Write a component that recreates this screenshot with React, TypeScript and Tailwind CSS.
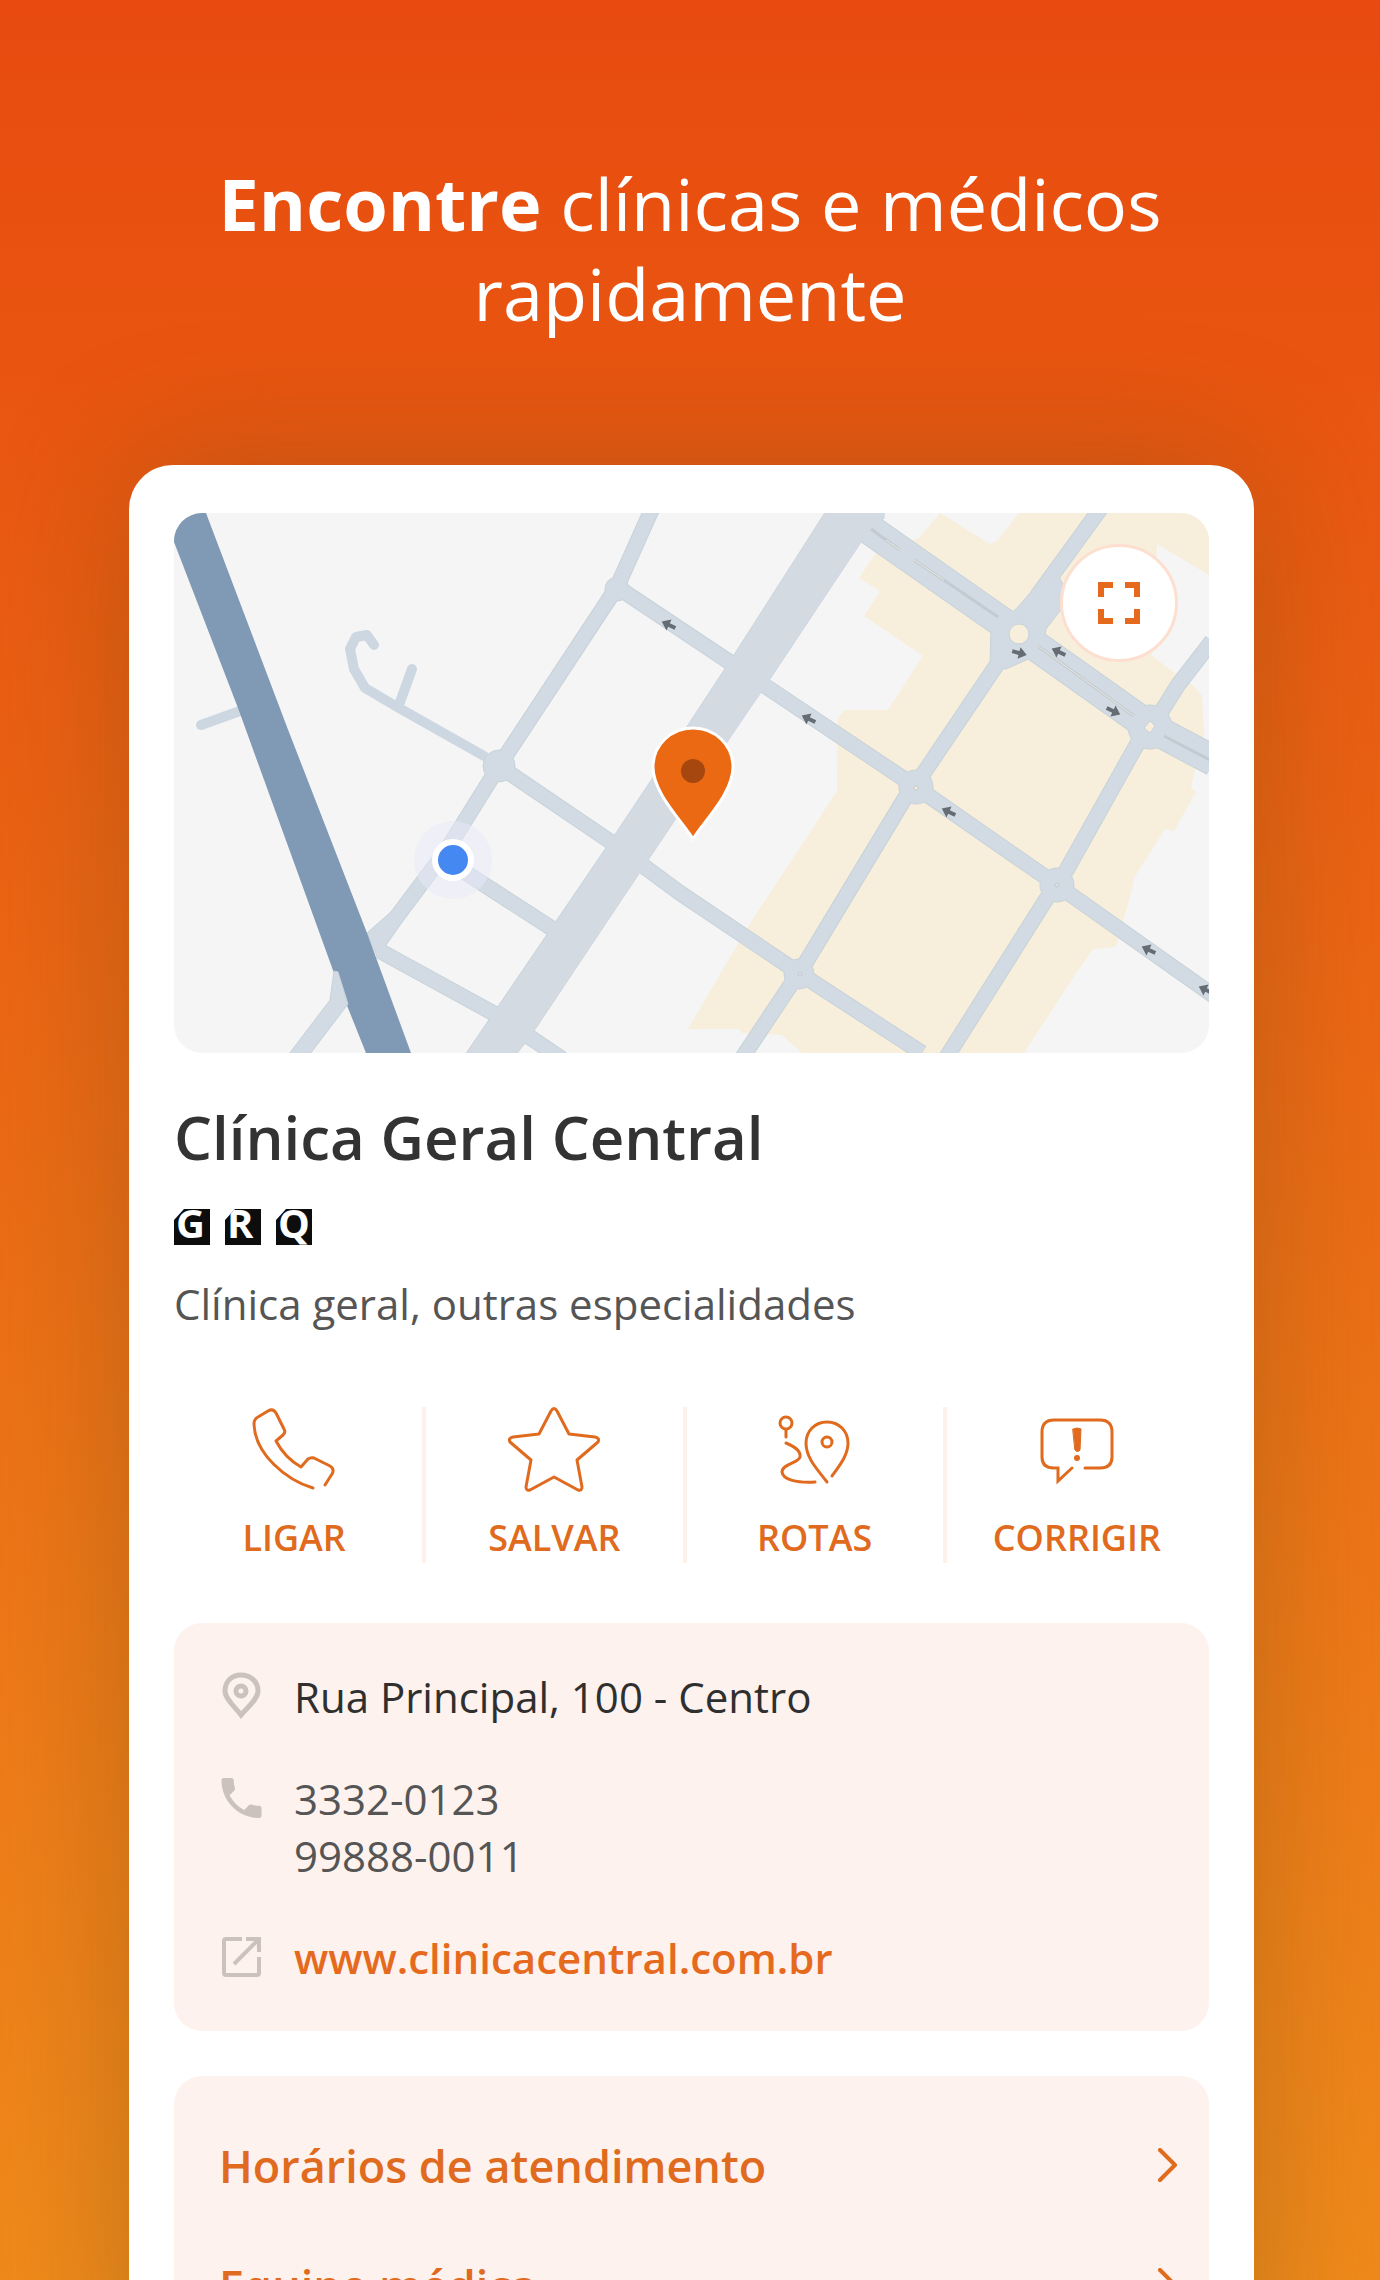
import type { ReactNode } from "react";

const roads = [
  // minor streets on the west side
  "M27 212 L66 198",
  "M200 132 L193 122 L182 124 L176 136 L180 156 L191 175 L225 195 L310 243",
  "M238 156 L225 192",
];

const streets = [
  "M478 -4 L443 74 L325 253 L272 338 L224 402 L200 436",
  "M443 74 L554 148 L742 274 L883 372 L1040 483",
  "M325 253 L437 329 L506 380 L625 460 L748 540",
  "M289 358 L385 420",
  "M206 438 L330 506 L351 521 L388 546",
  "M826 147 L747 264 L731 285 L632 449 L568 545",
  "M966 226 L892 358 L873 385 L772 545",
  "M863 83 L927 -5",
  "M984 204 L1004 172 L1038 128",
];

const junctions = [
  { x: 443, y: 76, r: 12 },
  { x: 325, y: 253, r: 16 },
  { x: 742, y: 274, r: 17 },
  { x: 883, y: 372, r: 17 },
  { x: 625, y: 461, r: 15 },
  { x: 976, y: 214, r: 22 },
];

// one-way marks, rotated along their street
const arrows = [
  { x: 495, y: 112, deg: 205 },
  { x: 635, y: 206, deg: 205 },
  { x: 775, y: 299, deg: 205 },
  { x: 885, y: 139, deg: 205 },
  { x: 975, y: 437, deg: 205 },
  { x: 1032, y: 477, deg: 205 },
  { x: 845, y: 140, deg: 15 },
  { x: 939, y: 198, deg: 25 },
];

function ClinicMap() {
  return (
    <svg viewBox="0 0 1035 540" className="block w-full" role="img" aria-label="Mapa da clínica">
      <rect width="1035" height="540" fill="#f5f5f5" />
      <path
        d="M766 0 L816 31 L824 27 L845 0 H1035 V62 L983 31 L978 143 L998 158 L1019 172 L1028 183 L1030 223 L1017 274 L1022 279 L1000 318 L991 316 L960 365 L957 380 L942 434 L919 436 L900 463 L850 540 H628 L608 522 L568 520 L566 516 H514 L575 412 L663 278 L664 205 L671 197 H714 L749 143 L690 103 L706 78 L685 65 L702 40 L745 25 Z"
        fill="#f7eedc"
      />

      <g fill="none" stroke="#ccd7e1" strokeWidth="10" strokeLinecap="round" strokeLinejoin="round">
        {roads.map((d) => (
          <path key={d} d={d} />
        ))}
      </g>

      {/* casing first, then the fill, so the crossings stay open */}
      <g fill="none" stroke="#c7d2d9" strokeWidth="16" strokeLinejoin="round">
        {streets.map((d) => (
          <path key={d} d={d} />
        ))}
        <path d="M695 16 L845 121 L976 214 L1040 248" strokeWidth="31" />
      </g>
      <g fill="#d2dbe3" stroke="#c7d2d9" strokeWidth="1">
        {junctions.map((j) => (
          <circle key={j.x} cx={j.x} cy={j.y} r={j.r} />
        ))}
        <path d="M817 118 L816 152 L832 156 L868 140 L872 116 L896 85 L884 62 L870 64 L843 95 Z" strokeLinejoin="round" />
        <path d="M652 -2 H710 V5 L687 29 L594 169 L554 227 L474 347 L360 518 L342 542 H291 L440 323 L514 212 L558 145 Z" />
        <path d="M193 420 L218 398 L230 403 L211 431 L204 446 Z" />
      </g>
      <g fill="none" stroke="#d2dbe3" strokeWidth="14" strokeLinejoin="round">
        {streets.map((d) => (
          <path key={d} d={d} />
        ))}
        <path d="M695 16 L845 121 L976 214 L1040 248" strokeWidth="29" />
      </g>
      <path d="M652 -2 H708 L687 30 L594 169 L360 518 L342 542 H292 L440 324 L558 146 Z" fill="#d3dae2" />

      <g fill="none" stroke="#c2cbd2" strokeWidth="3">
        <path d="M697 16 L726 37 M740 47 L780 74 L824 104 M864 133 L960 203 M990 223 L1036 247" />
      </g>
      <g fill="none" stroke="#eee8dc" strokeWidth="1">
        <path d="M712 27 L726 37 M740 47 L770 67 M864 133 L960 203" />
      </g>
      <circle cx="845" cy="121" r="10" fill="#f7eedc" stroke="#c7d2d9" />
      <path d="M976 208 L981 213 L976 220 L970 215 Z" fill="#f7eedc" stroke="#c7d2d9" />
      <circle cx="742" cy="275" r="2" fill="#f7eedc" stroke="#c7c9ca" />
      <circle cx="883" cy="372" r="2" fill="#dde0e0" stroke="#c1cbd2" />
      <circle cx="626" cy="461" r="2" fill="#dde0e0" stroke="#c1cbd2" />

      <path d="M-12 0 H32 L113 214 L193 420 L237 540 H192 L160 460 L64 195 L0 29 Z" fill="#8099b4" />
      <path d="M160 458 L164 459 L174 491 L136 541 H115 L156 487 Z" fill="#d2dbe3" stroke="#c7d2d9" />

      {arrows.map((a) => (
        <g key={a.x} transform={`translate(${a.x} ${a.y}) rotate(${a.deg})`} fill="#666c73">
          <path d="M-7 -2 H0 V-6 L8 0 L0 6 V2 H-7 Z" />
        </g>
      ))}

      <circle cx="279" cy="347" r="39" fill="#e8eafa" fillOpacity="0.5" />
      <circle cx="279" cy="347" r="21" fill="#fff" />
      <circle cx="279" cy="347" r="15" fill="#4688f1" />

      <path
        d="M519 326 C510 310 479 281 479 254 C479 232 497 215 519 215 C541 215 559 232 559 254 C559 281 528 310 519 326 Z"
        fill="#ec6913"
        stroke="#fff"
        strokeWidth="3"
      />
      <circle cx="519" cy="258" r="12" fill="#a6470f" />
    </svg>
  );
}

function ActionIcon({ children }: { children: ReactNode }) {
  return (
    <svg
      viewBox="0 2 92 88"
      className="h-[88px] w-[92px]"
      fill="none"
      stroke="currentColor"
      strokeWidth="3"
      strokeLinecap="round"
      strokeLinejoin="round"
      aria-hidden="true"
    >
      {children}
    </svg>
  );
}

const actions = [
  {
    label: "LIGAR",
    icon: (
      <path d="M65 83 C38 75 7 49 6 19 Q6 14 10 12 L20 6 Q25 3 28 8 L36 24 Q38 27 35 30 L28 36 Q37 53 53 62 L60 54 Q63 52 66 53 L82 61 Q87 64 84 69 L77 80" />
    ),
  },
  {
    label: "SALVAR",
    icon: (
      <path d="M43 6 Q46 1 49 6 L61 29 L87 32 Q92 33 90 37 L69 55 L74 82 Q74 86 70 85 L46 72 L22 85 Q18 86 18 82 L23 55 L2 37 Q0 33 5 32 L31 29 Z" />
    ),
  },
  {
    label: "ROTAS",
    icon: (
      <>
        <circle cx="17" cy="18" r="6" />
        <path d="M17 25 V32" />
        <path d="M17 38 C27 42 32 46 31 52 C30 58 13 59 13 67 C14 75 28 78 46 77" />
        <path d="M58 77 C50 66 37 54 37 38 C37 26 46 17 58 17 C70 17 79 26 79 38 C79 50 71 60 63 71" />
        <circle cx="58" cy="37" r="5" />
      </>
    ),
  },
  {
    label: "CORRIGIR",
    icon: (
      <>
        <path
          d="M54 63 H69 Q81 63 81 52 V27 Q81 15 69 15 H23 Q11 15 11 27 V52 Q11 63 23 63 H27 V76 L41 63"
          strokeLinejoin="miter"
        />
        <path d="M42 24 Q46 22 50 24 L49 45 Q46 48 44 45 Z" fill="currentColor" strokeWidth="1" />
        <circle cx="46" cy="53" r="3" fill="currentColor" stroke="none" />
      </>
    ),
  },
];

const links = ["Horários de atendimento", "Equipe médica"];

function Badge({ letter }: { letter: string }) {
  return (
    <span className="flex h-9 w-9 bg-[#0d0d0d] pl-0.5 text-[40px] leading-[27px] font-bold text-white [clip-path:polygon(10px_0,100%_0,100%_100%,0_100%,0_11px)]">
      {letter}
    </span>
  );
}

export default function App() {
  return (
    <main className="flex h-screen flex-col overflow-hidden bg-linear-to-b from-[#e84a0f] via-[#eb6a15] to-[#f08a1b] font-['Open_Sans','Noto_Sans',sans-serif]">
      <h1 className="px-50 pt-[158px] text-center text-[72px] leading-[90px] text-white">
        <b className="font-bold">Encontre</b> clínicas e médicos rapidamente
      </h1>

      <section className="mt-[127px] mr-[126px] ml-[129px] shrink-0 rounded-t-[44px] bg-white px-[45px] pt-12 pb-12 shadow-[0_0_140px_rgba(90,70,20,0.32)]">
        <div className="relative overflow-hidden rounded-[28px]">
          <ClinicMap />
          <button
            type="button"
            aria-label="Tela cheia"
            className="absolute top-[31px] right-[31px] flex h-[118px] w-[118px] items-center justify-center rounded-full border-3 border-[#fddfd0] bg-white text-[#e56a1e]"
          >
            <svg viewBox="0 0 42 42" className="h-[42px] w-[42px]" fill="none" stroke="currentColor" strokeWidth="6" aria-hidden="true">
              <path d="M3 15 V3 H15 M27 3 H39 V15 M39 27 V39 H27 M15 39 H3 V27" />
            </svg>
          </button>
        </div>

        <h2 className="mt-11 text-[60px] leading-[80px] font-semibold text-[#333]">Clínica Geral Central</h2>
        <div className="mt-8 flex gap-[15px]">
          <Badge letter="G" />
          <Badge letter="R" />
          <Badge letter="Q" />
        </div>
        <p className="mt-[30px] text-[42px] leading-[57px] text-[#555]">Clínica geral, outras especialidades</p>

        <div className="mt-[75px] mr-0.5 -ml-2 grid grid-cols-4 divide-x-4 divide-[#fdf1ec]">
          {actions.map((a) => (
            <button key={a.label} type="button" className="flex h-[156px] flex-col items-center text-[#e06a1e]">
              <ActionIcon>{a.icon}</ActionIcon>
              <span className="mt-[19px] text-[36px] leading-[48px] font-semibold">{a.label}</span>
            </button>
          ))}
        </div>

        <address className="mt-[60px] flex flex-col gap-[45px] rounded-[28px] bg-[#fdf2ed] px-[45px] py-[45px] text-[42px] leading-[57px] text-[#555] not-italic">
          <div className="flex items-start gap-[30px]">
            <svg viewBox="0 0 45 48" className="mt-1 h-12 w-[45px] text-[#cbc2be]" fill="none" stroke="currentColor" strokeWidth="5" aria-hidden="true">
              <path d="M22 43 C17 36 6 27 6 19 C6 9 13 3 22 3 C31 3 39 9 39 19 C39 27 28 36 22 43 Z" />
              <circle cx="22" cy="19" r="5" />
            </svg>
            <span className="text-[#2f2f2f]">Rua Principal, 100 - Centro</span>
          </div>
          <div className="flex items-start gap-[30px]">
            <svg viewBox="2 3 20 18" className="mt-2 h-10 w-[45px] text-[#cbc2be]" fill="currentColor" aria-hidden="true">
              <path d="M6.62 10.79c1.44 2.83 3.76 5.14 6.59 6.59l2.2-2.2c.27-.27.67-.36 1.02-.24 1.12.37 2.33.57 3.57.57.55 0 1 .45 1 1V20c0 .55-.45 1-1 1-9.39 0-17-7.61-17-17 0-.55.45-1 1-1h3.5c.55 0 1 .45 1 1 0 1.25.2 2.45.57 3.57.11.35.03.74-.25 1.02l-2.2 2.2z" />
            </svg>
            <div className="flex flex-col">
              <span>3332-0123</span>
              <span>99888-0011</span>
            </div>
          </div>
          <div className="flex items-start gap-[30px]">
            <svg viewBox="-3 0 45 40" className="mt-2 h-10 w-[45px] text-[#cbc2be]" fill="none" stroke="currentColor" strokeWidth="4" aria-hidden="true">
              <path d="M20 2 H4 Q2 2 2 4 V36 Q2 38 4 38 H35 Q37 38 37 36 V20 M24 2 H37 V15 M37 2 L12 27" />
            </svg>
            <a href="#site" className="font-semibold text-[#e56a1e]">
              www.clinicacentral.com.br
            </a>
          </div>
        </address>

        <nav className="mt-[45px] rounded-[28px] bg-[#fdf2ed] pt-[30px] pr-[30px] pl-[45px]">
          {links.map((label) => (
            <a key={label} href="#detalhes" className="flex h-[120px] items-center justify-between text-[45px] leading-[60px] font-semibold text-[#e06a1e]">
              {label}
              <svg viewBox="0 0 22 36" className="h-9 w-[22px]" fill="none" stroke="currentColor" strokeWidth="4" strokeLinecap="round" strokeLinejoin="round" aria-hidden="true">
                <path d="M3 2 L18 17 L3 32" />
              </svg>
            </a>
          ))}
        </nav>
      </section>
    </main>
  );
}
